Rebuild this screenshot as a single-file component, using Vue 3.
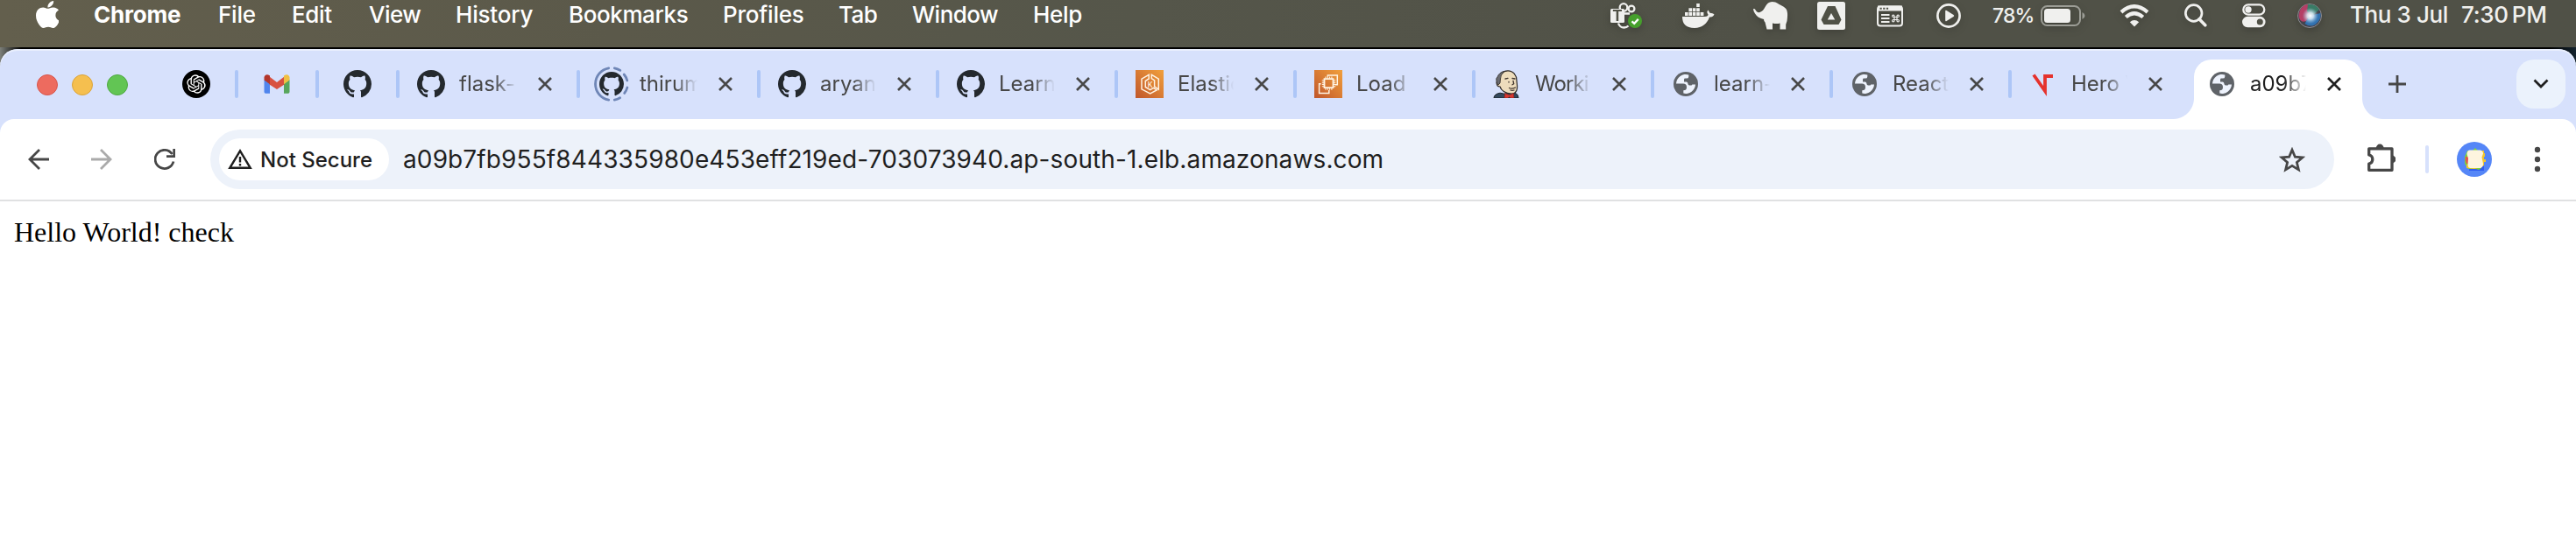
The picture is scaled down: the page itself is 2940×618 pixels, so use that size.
<script setup>
const menus = [
  { label: 'Chrome', width: 142, spacing: -0.2, strong: true },
  { label: 'File', width: 84, spacing: -0.2 },
  { label: 'Edit', width: 88, spacing: -0.35 },
  { label: 'View', width: 99, spacing: -0.5 },
  { label: 'History', width: 129, spacing: -0.2 },
  { label: 'Bookmarks', width: 176, spacing: -0.4 },
  { label: 'Profiles', width: 132, spacing: -0.2 },
  { label: 'Tab', width: 84, spacing: -0.5 },
  { label: 'Window', width: 138, spacing: -0.5 },
  { label: 'Help', width: 60, spacing: -0.3 },
]

const tabs = [
  { title: 'flask-', icon: 'github', width: 206 },
  { title: 'thirum', icon: 'loading', width: 206 },
  { title: 'aryan', icon: 'github', width: 204 },
  { title: 'Learn', icon: 'github', width: 204 },
  { title: 'Elastic', icon: 'eks', width: 204 },
  { title: 'Load', icon: 'ec2', width: 204 },
  { title: 'Worki', icon: 'jenkins', width: 204, spacing: -0.9 },
  { title: 'learn-', icon: 'globe', width: 204 },
  { title: 'React', icon: 'globe', width: 204 },
  { title: 'Hero V', icon: 'hero', width: 204 },
]
</script>

<template>
  <svg class="sprite" aria-hidden="true">
    <defs>
      <linearGradient id="aws" x1="0" y1="1" x2="1" y2="0">
        <stop offset="0" stop-color="#c0562b" />
        <stop offset="1" stop-color="#f1a03c" />
      </linearGradient>
      <radialGradient id="siri-core" cx=".53" cy=".5" r=".34">
        <stop offset="0" stop-color="#fff" />
        <stop offset=".4" stop-color="#dfeef8" stop-opacity=".85" />
        <stop offset="1" stop-color="#9fc4e0" stop-opacity="0" />
      </radialGradient>
    </defs>
    <symbol id="github" viewBox="0 0 16 16">
      <path fill="#24292e" d="M8 0C3.58 0 0 3.58 0 8c0 3.54 2.29 6.53 5.47 7.59.4.07.55-.17.55-.38 0-.19-.01-.82-.01-1.49-2.01.37-2.53-.49-2.69-.94-.09-.23-.48-.94-.82-1.13-.28-.15-.68-.52-.01-.53.63-.01 1.08.58 1.23.82.72 1.21 1.87.87 2.33.66.07-.52.28-.87.51-1.07-1.78-.2-3.64-.89-3.64-3.95 0-.87.31-1.59.82-2.15-.08-.2-.36-1.02.08-2.12 0 0 .67-.21 2.2.82.64-.18 1.32-.27 2-.27s1.36.09 2 .27c1.53-1.04 2.2-.82 2.2-.82.44 1.1.16 1.92.08 2.12.51.56.82 1.27.82 2.15 0 3.07-1.87 3.75-3.65 3.95.29.25.54.73.54 1.48 0 1.07-.01 1.93-.01 2.2 0 .21.15.46.55.38A8.01 8.01 0 0 0 16 8c0-4.42-3.58-8-8-8z" />
    </symbol>
    <symbol id="loading" viewBox="0 0 32 32" overflow="visible">
      <g fill="none" stroke="#6f86b6" stroke-width="2.8" stroke-linecap="round">
        <path d="M12.7-2.2a18.5 18.5 0 0 0 0 36.4" />
        <path d="M19.3-2.2a18.5 18.5 0 0 1 6.5 2.6M30.2 5a18.5 18.5 0 0 1 3.6 7M33.9 20a18.5 18.5 0 0 1-3.2 6.4M25.6 31.8a18.5 18.5 0 0 1-6.3 2.4" />
      </g>
      <use href="#github" x="2" y="2" width="28" height="28" />
    </symbol>
    <symbol id="globe" viewBox="0 0 32 32">
      <g transform="translate(2 2)">
        <circle cx="14" cy="14" r="14" fill="#5f6368" />
        <path fill="#eef3fd" d="M3 13.6A11 11 0 0 1 17.3 3.5V5.4q0 2.2-2.4 2.2h-1.6q-1.3 0-1.3 1.400v2.400h2.600q1.500 0 1.700 1.600.2 2.600 2.900 2.600 1.700 0 2.200-1.200H25A11 11 0 0 1 11.300 24.600V21.300q3.700 0 3.700-3.600 0-4.100-4-4.100z" />
      </g>
    </symbol>
    <symbol id="eks" viewBox="0 0 32 32">
      <path fill="url(#aws)" d="M0 0h32v32H0z" />
      <g fill="none" stroke="#fff3e2" stroke-width="1.5">
        <path d="M15.2 5.3 7 10.2v11.6l9.7 5.2 7.5-4.1-3.6-2.5-3.9 2.2-5.4-3.1v-7l3.9-2.5z" />
        <path d="M18.3 5.3v4.4l3.3 2.2v6.9l4.7 3.2V10.2z" />
      </g>
      <text x="16.7" y="19.7" class="k">K</text>
    </symbol>
    <symbol id="ec2" viewBox="0 0 32 32">
      <path fill="url(#aws)" d="M0 0h32v32H0z" />
      <g fill="none" stroke="#fff3e2" stroke-width="1.5">
        <path d="M11.5 10.2h10v10h-10z" stroke-width="1.8" />
        <path d="M13 7.5v2.3M15.3 7.5v2.3M17.6 7.5v2.3M19.9 7.5v2.3M13 20.5v2.3M15.3 20.5v2.3M17.6 20.5v2.3M19.9 20.5v2.3M8.8 11.8h2.3M8.8 14.1h2.3M8.8 16.4h2.3M8.8 18.7h2.3M22 11.8h2.3M22 14.1h2.3M22 16.4h2.3M22 18.7h2.3" stroke-width="1.1" />
        <path d="M15.3 7.8V5.9h11v10.8h-2.5M7.6 15.7h-2v10.8h11.2v-3.6" />
      </g>
    </symbol>
    <symbol id="jenkins" viewBox="0 0 32 32">
      <path fill="#33485c" stroke="#1d2329" d="M1 32q0-4.500 7-5.800l5 1 5-1 8 .5q3 1.300 3 5.300z" />
      <path fill="#eddcbc" stroke="#2e2926" stroke-width="1.200" d="M6 12C6 5 11 .8 17 .8S27 6 27 12c0 3 1 5 .5 9-.5 4-3 6-6.500 6C14 27 9 23 8 19c-3 0-4-2-4-5z" />
      <path fill="#6a6b70" stroke="#2e2926" stroke-width=".8" d="M4 13Q3 9 5 8 7 2.500 13 1.500 8 6 8.500 10l-.5 5-2 2Q4 15 4 13z" />
      <path fill="none" stroke="#40352e" stroke-width="1.300" stroke-linecap="round" d="M14 10l3-.6M22 9.500l3 .5M18 13.500v.5M23 12.500l.7 3.300-1.700 1M18.500 20.500q3 1.500 7-.5M20 23q2 .7 4 0" />
      <path fill="#d8372f" stroke="#7d1f1b" stroke-width=".6" d="M13.500 26.500l5 2 5-2 .5 5.500h-4l-1.500-1.500L17 32h-4z" />
    </symbol>
    <symbol id="hero" viewBox="0 0 32 32">
      <path fill="none" stroke="#e5322d" stroke-width="3.800" d="M5 5.500 18 24V7h9" />
    </symbol>
    <symbol id="close" viewBox="0 0 16 16">
      <path fill="none" stroke="currentColor" stroke-width="2.600" d="M1 1l14 14M15 1 1 15" />
    </symbol>
  </svg>

  <div class="screen">
    <header class="menubar">
      <svg class="apple" viewBox="4 32 365 448" preserveAspectRatio="none"><path fill="#fff" d="M318.700 268.700c-.2-36.700 16.400-64.400 50-84.800-18.800-26.900-47.200-41.700-84.700-44.600-35.500-2.800-74.300 20.700-88.500 20.700-15 0-49.400-19.700-76.400-19.700C63.300 141.200 4 184.800 4 273.500q0 39.300 14.400 81.200c12.800 36.700 59 126.700 107.200 125.200 25.200-.6 43-17.900 75.800-17.900 31.800 0 48.300 17.900 76.400 17.900 48.600-.7 90.400-82.500 102.600-119.300-65.200-30.700-61.700-90-61.700-91.900zm-56.600-164.200c27.300-32.400 24.800-61.900 24-72.500-24.100 1.400-52 16.400-67.900 34.900-17.500 19.800-27.800 44.300-25.600 71.900 26.100 2 49.900-11.400 69.500-34.300z" /></svg>
      <nav class="menus">
        <span
          v-for="m in menus"
          :key="m.label"
          class="menu"
          :class="{ strong: m.strong }"
          :style="{ width: m.width + 'px', letterSpacing: m.spacing + 'px' }"
        >{{ m.label }}</span>
      </nav>
      <div class="status">
        <svg width="36" height="36" viewBox="0 0 36 36">
          <g fill="none" stroke="#f0f0ee" stroke-width="2.300">
            <circle cx="15" cy="8.500" r="4.300" /><circle cx="24" cy="10" r="3.400" />
            <path d="M16 15.500h6M9 26.500q1.500 5 6.500 5 3 0 5-2" />
          </g>
          <rect x="0" y="10" width="16" height="16" rx="1.500" fill="#f0f0ee" />
          <text x="8" y="24" class="teams-t">T</text>
          <circle cx="28" cy="24" r="8" fill="#46a02c" />
          <path d="m24.500 24.300 2.700 2.600 4.600-5" fill="none" stroke="#fff" stroke-width="2.300" />
        </svg>
        <svg width="37" height="36" viewBox="0 0 37 36" fill="#f0f0ee">
          <path d="M0 19h25.500c3 0 4-1 4-2.500-1.800-2-1.200-4 0-5l2 3.300c2 .2 3.800.6 5 1.700-1.200 2.500-3 3-5.500 3C28.500 27 22.500 32 14 32 4 32 0 27 0 19z" />
          <path d="M3 14h3.600v4H3zM7.400 14H11v4H7.400zM11.800 14h3.600v4h-3.600zM16.200 14h3.600v4h-3.600zM20.600 14h3.800v4h-3.800zM7.400 9.200H11v4H7.400zM11.800 9.200h3.600v4h-3.600zM16.200 9.200h3.600v4h-3.600zM16.200 4h3.600v4h-3.600z" />
        </svg>
        <svg width="40" height="36" viewBox="0 0 40 36">
          <path fill="#f0f0ee" d="M0 10.500c.8-.8 1.800-.5 2.300.6C3.500 13.600 5.200 14.600 7.500 14c3-1.200 4.500-3 6-6C15.500 4 18 2 21.500 2c3 0 4.500.8 7 2.200C31 6 36 7.500 38 11c1.700 4 1 9 .5 13l-1.300 4V33.500H30.500V26.500q-4 1-8.500 0v7h-6.500l-2-8q-1.500-1.200-1.500-3.500-7-1.500-10-6.500Q.3 13 0 10.500z" />
        </svg>
        <svg width="32" height="36" viewBox="0 0 32 36">
          <rect y="2" width="32" height="32" rx="2.500" fill="#f0f0ee" />
          <path fill="#505146" d="M12 7h8.500l7 15.500-3 5.500h-17l-3-5.500z" />
          <path fill="#f0f0ee" d="m16 15 4.200 7.500h-8.400z" />
        </svg>
        <svg width="30" height="36" viewBox="0 0 30 36">
          <rect x="1" y="7.500" width="28" height="22" rx="3" fill="none" stroke="#f0f0ee" stroke-width="2" />
          <path fill="#f0f0ee" d="M1 6.500h28v6H1z" />
          <path d="M3.500 9.800h2.200M7.200 9.800h2.200M10.900 9.800h2.200" stroke="#505146" stroke-width="2" />
          <path d="M5 17h9.500M5 21h9.500M5 25h9.500" stroke="#f0f0ee" stroke-width="1.800" />
          <path d="M20 19.500h3v3h-3zM20 19.500h-1.200a1.200 1.200 0 1 1 1.200-1.200zM23 19.500v-1.200a1.200 1.200 0 1 1 1.200 1.200zM23 22.500h1.200a1.200 1.200 0 1 1-1.200 1.200zM20 22.500v1.200a1.200 1.200 0 1 1-1.200-1.200z" fill="none" stroke="#f0f0ee" stroke-width="1.200" />
        </svg>
        <svg width="28" height="36" viewBox="0 0 28 36">
          <circle cx="14" cy="18" r="12.600" fill="none" stroke="#f0f0ee" stroke-width="2.700" />
          <path fill="#f0f0ee" d="M10.200 12.800q0-1.600 1.400-.8l8 5q1.300 1 0 2l-8 5q-1.400.8-1.400-.8z" />
        </svg>
        <span class="percent">78%</span>
        <svg width="52" height="36" viewBox="0 0 52 36">
          <rect x="1" y="7" width="44" height="22" rx="6.500" fill="none" stroke="#9c9d96" stroke-width="2" />
          <rect x="4" y="10" width="30" height="16" rx="3.500" fill="#f0f0ee" />
          <path fill="#9c9d96" d="M47.500 14q3 1.500 3 4t-3 4z" />
        </svg>
        <svg width="34" height="36" viewBox="0 0 34 36" fill="none" stroke="#f0f0ee" stroke-width="4.200">
          <path d="M2 13.800q14.800-13 30 0M7.300 19.500q9.500-8.500 19.500 0" />
          <path fill="#f0f0ee" stroke="none" d="M17 30.500l-5.200-5.300q5.200-4.500 10.400 0z" />
        </svg>
        <svg width="26" height="36" viewBox="0 0 26 36" fill="none" stroke="#f0f0ee">
          <circle cx="10.700" cy="15" r="9.300" stroke-width="2.700" />
          <path d="m17 21.800 6.800 7" stroke-width="3.600" stroke-linecap="round" />
        </svg>
        <svg width="27" height="36" viewBox="0 0 27 36">
          <rect x="1.300" y="5.300" width="24" height="11.400" rx="5.700" fill="none" stroke="#f0f0ee" stroke-width="2.300" />
          <circle cx="7" cy="11" r="3.700" fill="#f0f0ee" />
          <rect x="0" y="18.800" width="26.600" height="12.500" rx="6.250" fill="#f0f0ee" />
          <circle cx="20.300" cy="25" r="3.500" fill="#505146" />
        </svg>
        <svg width="28" height="36" viewBox="0 0 28 36">
          <circle cx="14" cy="18" r="13.500" fill="#44434d" stroke="#8b8b90" stroke-width="1" />
          <path d="M2.500 13Q6 5 12 5l3 11-5 8Q3 27 1.500 18z" fill="#b53e66" />
          <path d="M12 5q9-1 13 6l-8 7-6-5z" fill="#3a7c66" />
          <path d="M26.500 15q1 8-6 13-6 3.500-12-1l5-9z" fill="#3272b0" />
          <circle cx="14" cy="18" r="13.500" fill="url(#siri-core)" />
        </svg>
        <span class="date">Thu 3 Jul</span>
        <span class="time">7:30<i></i>PM</span>
      </div>
    </header>

    <main class="desktop">
      <section class="window">
        <div class="strip">
          <div class="lights"><i class="red"></i><i class="yellow"></i><i class="green"></i></div>
          <div class="pin first">
            <svg width="32" height="32" viewBox="0 0 32 32">
              <circle cx="16" cy="16" r="16" />
              <path fill="#fff" transform="translate(5.300 5.300) scale(.892)" d="M22.2819 9.8211a5.9847 5.9847 0 0 0-.5157-4.9108 6.0462 6.0462 0 0 0-6.5098-2.9A6.0651 6.0651 0 0 0 4.9807 4.1818a5.9847 5.9847 0 0 0-3.9977 2.9 6.0462 6.0462 0 0 0 .7427 7.0966 5.98 5.98 0 0 0 .511 4.9107 6.051 6.051 0 0 0 6.5146 2.9001A5.9847 5.9847 0 0 0 13.2599 24a6.0557 6.0557 0 0 0 5.7718-4.2058 5.9894 5.9894 0 0 0 3.9977-2.9001 6.0557 6.0557 0 0 0-.7475-7.0729zm-9.022 12.6081a4.4755 4.4755 0 0 1-2.8764-1.0408l.1419-.0804 4.7783-2.7582a.7948.7948 0 0 0 .3927-.6813v-6.7369l2.02 1.1686a.071.071 0 0 1 .038.052v5.5826a4.504 4.504 0 0 1-4.4945 4.4944zm-9.6607-4.1254a4.4708 4.4708 0 0 1-.5346-3.0137l.142.0852 4.783 2.7582a.7712.7712 0 0 0 .7806 0l5.8428-3.3685v2.3324a.0804.0804 0 0 1-.0332.0615L9.74 19.9502a4.4992 4.4992 0 0 1-6.1408-1.6464zM2.3408 7.8956a4.485 4.485 0 0 1 2.3655-1.9728V11.6a.7664.7664 0 0 0 .3879.6765l5.8144 3.3543-2.0201 1.1685a.0757.0757 0 0 1-.071 0l-4.8303-2.7865A4.504 4.504 0 0 1 2.3408 7.872zm16.5963 3.8558L13.1038 8.364 15.1192 7.2a.0757.0757 0 0 1 .071 0l4.8303 2.7913a4.4944 4.4944 0 0 1-.6765 8.1042v-5.6772a.79.79 0 0 0-.407-.667zm2.0107-3.0231l-.142-.0852-4.7735-2.7818a.7759.7759 0 0 0-.7854 0L9.409 9.2297V6.8974a.0662.0662 0 0 1 .0284-.0615l4.8303-2.7866a4.4992 4.4992 0 0 1 6.6802 4.66zM8.3065 12.863l-2.02-1.1638a.0804.0804 0 0 1-.038-.0567V6.0742a4.4992 4.4992 0 0 1 7.3757-3.4537l-.142.0805L8.704 5.459a.7948.7948 0 0 0-.3927.6813zm1.0976-2.3654l2.602-1.4998 2.6069 1.4998v2.9994l-2.5974 1.4997-2.6067-1.4997Z" />
            </svg>
          </div>
          <div class="pin">
            <i class="sep"></i>
            <svg class="gmail" width="30" height="22" viewBox="0 0 30 22">
              <path fill="#5085ed" d="M.5 6v14q0 1.700 1.700 1.700H7V10.500z" />
              <path fill="#58a65c" d="M29.500 6v14q0 1.700-1.700 1.700H23V10.500z" />
              <path fill="#d85140" d="M6.500 2.500 15 9l8.500-6.500v9L15 17l-8.500-5.500z" />
              <path fill="#b3352a" d="M.5 3.500C.5.500 4-.8 6.300 1l.7.600v9.600L.5 6.500z" />
              <path fill="#f0c043" d="M29.500 3.500c0-3-3.500-4.300-5.800-2.500l-.7.600v9.600l6.500-4.700z" />
            </svg>
          </div>
          <div class="pin">
            <i class="sep"></i>
            <svg width="32" height="32"><use href="#github" /></svg>
          </div>
          <div v-for="t in tabs" :key="t.title" class="tab" :style="{ width: t.width + 'px' }">
            <i class="sep"></i>
            <svg class="fav" width="32" height="32"><use :href="'#' + t.icon" /></svg>
            <span class="title" :style="{ letterSpacing: (t.spacing || 0) + 'px' }">{{ t.title }}</span>
            <svg class="x" width="16" height="16"><use href="#close" /></svg>
          </div>
          <div class="tab active">
            <svg class="fav" width="32" height="32"><use href="#globe" /></svg>
            <span class="title">a09b7</span>
            <svg class="x" width="16" height="16"><use href="#close" /></svg>
          </div>
          <svg class="plus" width="20" height="20" viewBox="0 0 20 20"><path stroke="#474747" stroke-width="2.800" d="M10 0v20M0 10h20" /></svg>
          <div class="search-tabs">
            <svg width="18" height="12" viewBox="0 0 18 12"><path fill="none" stroke="#1f1f1f" stroke-width="2.800" d="m1.500 1.500 7.500 7.500 7.500-7.500" /></svg>
          </div>
        </div>

        <div class="toolbar">
          <div class="nav">
            <svg width="24" height="24" viewBox="0 0 24 24" fill="none" stroke="#474747" stroke-width="2.800"><path d="M24 12H2M13 1 2 12l11 11" /></svg>
            <svg width="24" height="24" viewBox="0 0 24 24" fill="none" stroke="#aaa" stroke-width="2.800"><path d="M0 12h22M11 1l11 11-11 11" /></svg>
            <svg width="24" height="24" viewBox="0 0 24 24" fill="none" stroke="#474747" stroke-width="2.800"><path d="M22 14.500A10.600 10.600 0 1 1 20.500 6" /><path fill="#474747" stroke="none" d="M21.300 0H24v10H14V7.300h7.300z" /></svg>
          </div>
          <div class="omnibox">
            <div class="chip">
              <svg width="28" height="24" viewBox="0 0 28 24"><path fill="none" stroke="#1f1f1f" stroke-width="2.400" d="M14 2.400 2.300 21.800h23.400z" /><path fill="#1f1f1f" d="M12.800 9h2.400v6.500h-2.400zM12.800 17h2.400v2.400h-2.400z" /></svg>
              <span>Not Secure</span>
            </div>
            <span class="url">a09b7fb955f844335980e453eff219ed-703073940.ap-south-1.elb.amazonaws.com</span>
            <svg class="star" width="30" height="29" viewBox="0 0 30 29"><path fill="none" stroke="#474747" stroke-width="2.800" d="m15 3.200 3.400 8 8.500.7-6.500 5.600 2 8.400-7.400-4.500-7.400 4.500 2-8.400-6.500-5.600 8.500-.7z" /></svg>
          </div>
          <svg class="puzzle" width="32" height="32" viewBox="0 0 32 32">
            <path fill="none" stroke="#474747" stroke-width="3.300" stroke-linejoin="round" d="M1.700 5.900h26.300v24.400H1.700v-7.300a5.100 5.100 0 0 0 0-10z" />
            <path fill="#474747" d="M9.800 5a4.400 4.400 0 0 1 8.800 0zM28 13.600a4.400 4.400 0 0 1 0 8.800z" />
          </svg>
          <i class="divider"></i>
          <svg class="avatar" width="40" height="40" viewBox="0 0 40 40">
            <circle cx="20" cy="20" r="20" fill="#5586f7" />
            <path fill="#2f5df0" d="M14 20 31 12v21H14z" />
            <path fill="#7bd13f" d="M12 10h6l3-3 3 3h4v20l-3 2-3-1H13l-4-6V17z" />
            <path fill="#f2c52e" d="M27 10h4v3h1v4h-1v3h2v3h-2v4l-3 2-8 2-9-1V26h15z" />
            <path fill="#e2564a" d="M10 17h3v8h-2q-2-4-1-8z" />
            <path fill="#fdf5df" d="M14 9.500h13q3 1 3 4l-1.500 4L30 25q0 4-3 5H15q-2.500-1-2.500-4l.5-7-1.500-5q0-3.500 2.500-4.500z" />
          </svg>
          <svg class="dots" width="8" height="30" viewBox="0 0 8 30" fill="#474747"><circle cx="4" cy="4" r="3.200" /><circle cx="4" cy="15" r="3.200" /><circle cx="4" cy="26" r="3.200" /></svg>
        </div>

        <article class="page">Hello World! check</article>
      </section>
    </main>
  </div>
</template>

<style>
body { margin: 0; background: #fff; }
</style>

<style scoped>
.sprite { position: absolute; width: 0; height: 0; }
svg { display: block; flex: none; }
.screen { width: 2940px; height: 618px; overflow: hidden; font-family: Inter, "Liberation Sans", sans-serif; background: #fff; }
.menubar { display: flex; height: 54px; box-sizing: border-box; padding-left: 41px; background: linear-gradient(90deg, #635f4d 0, #5b594a 700px, #55564a 1300px, #505147 2000px, #505147); }
.apple { width: 26px; height: 31px; margin-top: 1px; }
.menus { display: flex; width: 1771px; box-sizing: border-box; padding-left: 40px; }
.menu { flex: none; white-space: nowrap; color: #fff; font-size: 26px; line-height: 32px; margin-top: 1px; font-weight: 500; }
.menu.strong { font-weight: 700; }
.status { display: grid; grid-template-columns: 82px 81px 73px 68px 68px 64px 55px 90px 74px 66px 63px 60px 127px 131px; justify-items: start; align-items: start; color: #f0f0ee; white-space: nowrap; }
.status svg { filter: drop-shadow(0 3px 4px rgba(0, 0, 0, .2)); }
.percent { font-size: 23px; line-height: 32px; margin-top: 2px; font-weight: 500; letter-spacing: -0.9px; }
.date, .time { font-size: 26px; line-height: 32px; margin-top: 1px; font-weight: 500; }
.date { letter-spacing: -0.4px; }
.time { letter-spacing: -0.3px; }
.time i { display: inline-block; width: 4px; }
.teams-t { font: 700 17px Inter, sans-serif; text-anchor: middle; fill: #505146; }
.k { font: 500 8.500px Inter, sans-serif; text-anchor: middle; fill: #fff3e2; }

.desktop { background: linear-gradient(90deg, #7d807a 0, #000 24px, #000 2910px, #14232e 2940px); padding-top: 2px; }
.window { height: 562px; background: #d7e1fc; border-radius: 20px 20px 0 0; overflow: hidden; box-shadow: inset 0 2px 0 #e9effd; }
.strip { display: flex; align-items: center; height: 80px; }
.lights { display: flex; gap: 16px; width: 166px; padding-left: 42px; margin-top: 2px; }
.lights i { width: 24px; height: 24px; box-sizing: border-box; border-radius: 50%; border: 1px solid; }
.lights .red { background: #ed6b5f; border-color: #d8564c; }
.lights .yellow { background: #f5bf4f; border-color: #dba43c; }
.lights .green { background: #62c554; border-color: #50a943; }
.pin { display: flex; align-items: center; width: 92px; }
.pin.first { width: 60px; }
.pin svg { margin-left: 28px; }
.pin.first svg { margin-left: 0; }
.pin .gmail { margin-left: 29px; }
.sep { flex: none; width: 4px; height: 32px; border-radius: 2px; background: #adc6f7; }
.tab { display: flex; align-items: center; flex: none; box-sizing: border-box; padding-right: 28px; color: #474747; }
.fav { margin-left: 20px; margin-right: 16px; overflow: visible; }
.title { flex: 1; min-width: 0; overflow: hidden; white-space: nowrap; font-size: 24px; line-height: 32px; -webkit-mask-image: linear-gradient(90deg, #000 calc(100% - 26px), transparent); mask-image: linear-gradient(90deg, #000 calc(100% - 26px), transparent); }
.x { margin-left: 24px; }
.active { position: relative; width: 192px; height: 68px; margin: 12px 0 0 8px; padding: 0 24px 12px 16px; background: #fff; border-radius: 20px 20px 0 0; color: #1f1f1f; }
.active .fav { margin-left: 0; }
.active::before, .active::after { content: ""; position: absolute; bottom: 0; width: 24px; height: 24px; }
.active::before { left: -24px; background: radial-gradient(circle at 0 0, transparent 23.500px, #fff 24.500px); }
.active::after { right: -24px; background: radial-gradient(circle at 100% 0, transparent 23.500px, #fff 24.500px); }
.plus { margin-left: 30px; }
.search-tabs { display: flex; align-items: center; justify-content: center; width: 56px; height: 56px; margin-left: auto; margin-right: 12px; border-radius: 20px; background: #ebf2fc; }
.toolbar { display: flex; align-items: center; height: 92px; background: #fff; border-bottom: 2px solid #e0e1e2; border-radius: 16px 16px 0 0; }
.nav { display: flex; gap: 48px; padding-left: 32px; width: 208px; }
.omnibox { display: flex; align-items: center; width: 2424px; height: 68px; border-radius: 34px; background: #edf2fa; color: #1f1f1f; }
.chip { display: flex; align-items: center; gap: 9px; width: 194px; height: 48px; margin-left: 10px; padding-left: 10px; box-sizing: border-box; border-radius: 24px; background: #fff; font-size: 24px; font-weight: 500; white-space: nowrap; }
.url { margin-left: 16px; font-size: 28px; letter-spacing: 0.12px; white-space: nowrap; }
.star { margin-left: auto; margin-right: 33px; }
.puzzle { margin-left: 38px; margin-top: -4px; }
.divider { width: 4px; height: 32px; margin-left: 34px; border-radius: 2px; background: #d7e1fc; }
.avatar { margin-left: 32px; }
.dots { margin-left: 48px; }
.page { height: 388px; padding: 17px 16px 16px; box-sizing: border-box; background: #fff; color: #000; font: 32px "Liberation Serif", "Times New Roman", serif; }
</style>
